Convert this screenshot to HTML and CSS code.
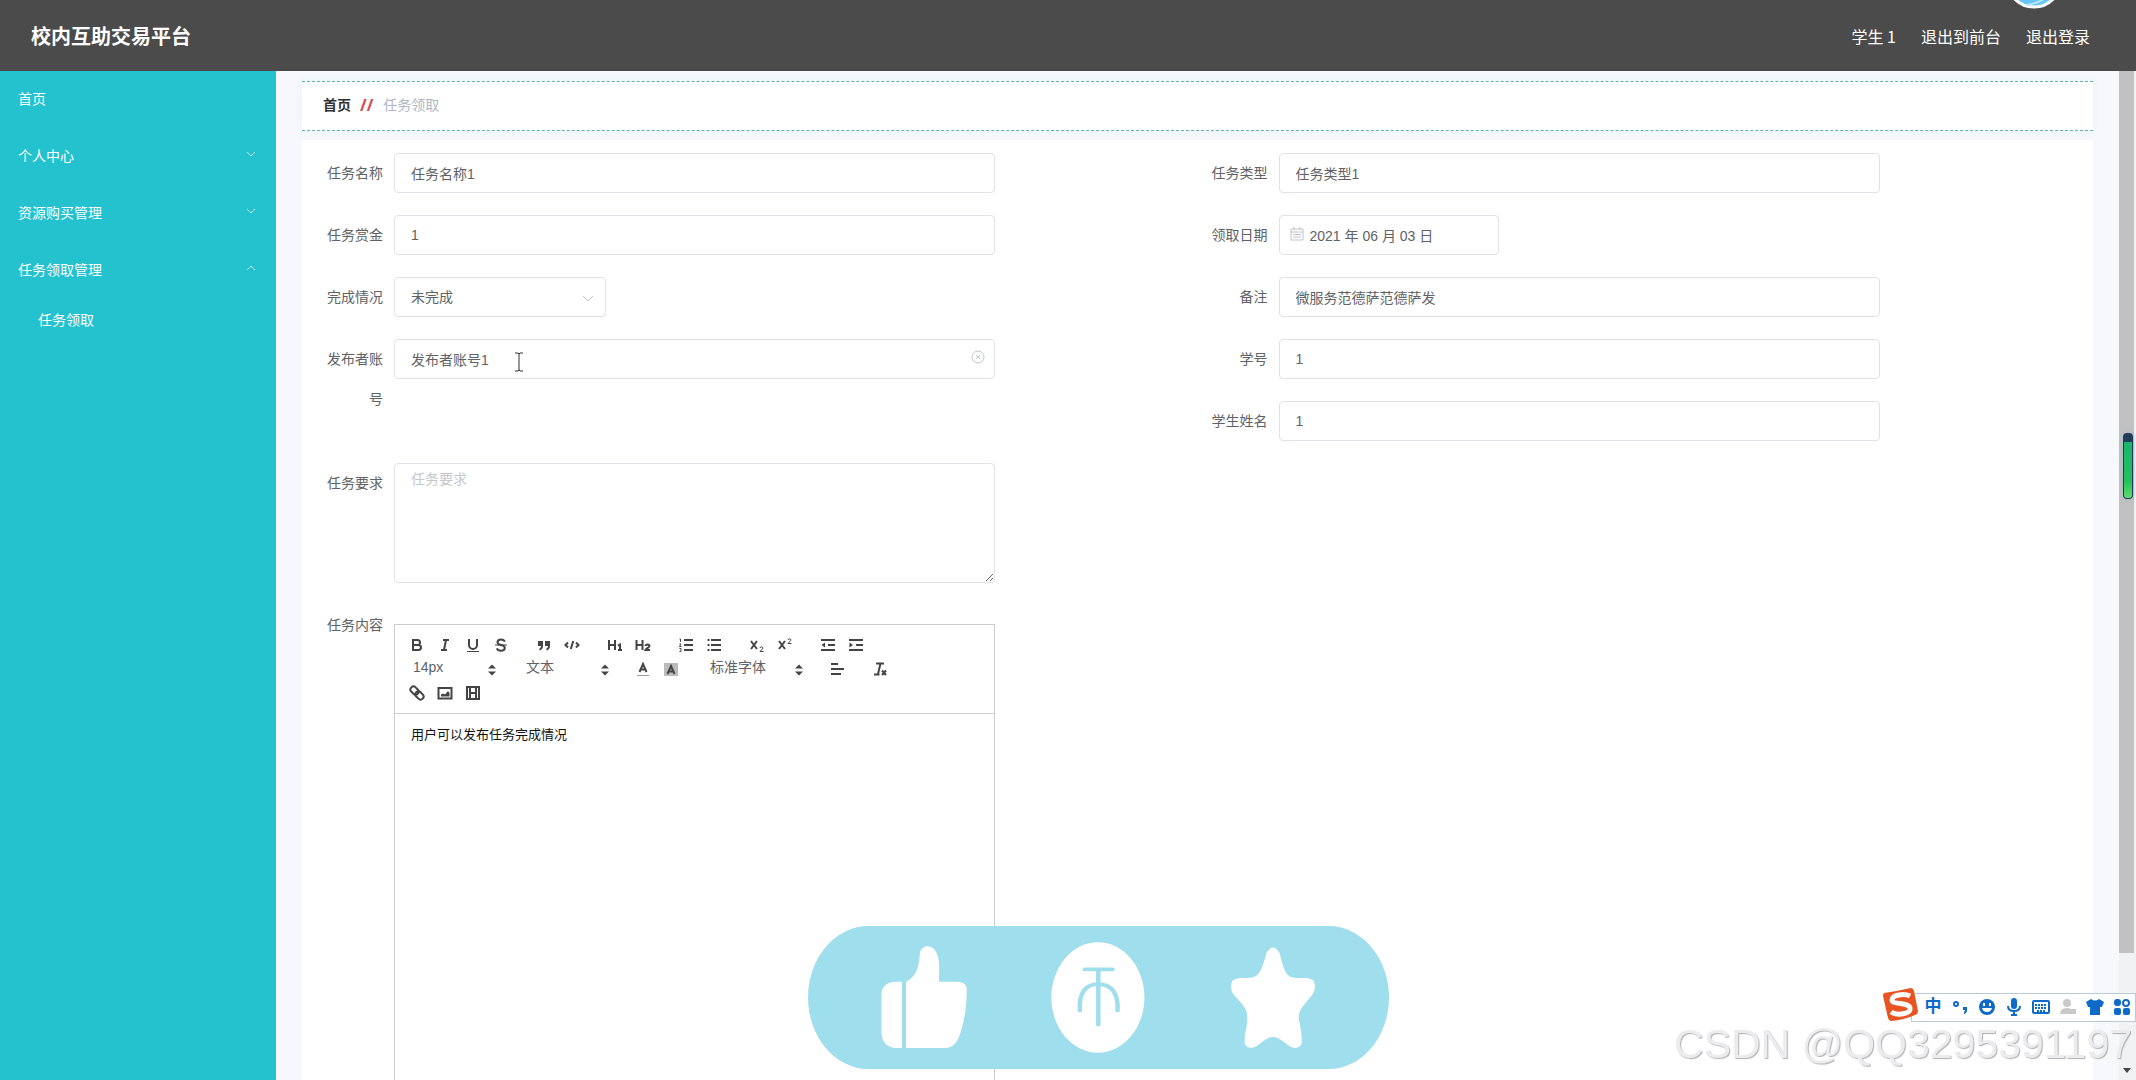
FILE: index.html
```html
<!DOCTYPE html>
<html lang="zh-CN">
<head>
<meta charset="utf-8">
<title>校内互助交易平台</title>
<link rel="stylesheet" href="styles.css">
</head>
<body>
<header class="topbar">
  <h1 class="brand">校内互助交易平台</h1>
  <div class="account">
    <span>学生 1</span>
    <a href="#front">退出到前台</a>
    <a href="#logout">退出登录</a>
  </div>
  <svg class="avatar" viewBox="0 0 58 58" aria-hidden="true"><circle cx="29" cy="29" r="27" fill="#65c6f7" stroke="#fff" stroke-width="3"/><path d="M22 54Q34 52 42 46" stroke="#b5e6ff" stroke-width="2" fill="none"/></svg>
</header>
<div class="shell">
  <nav class="sidebar">
    <a class="nav-item" href="#home">首页</a>
    <a class="nav-item" href="#me">个人中心<svg class="chevron" viewBox="0 0 10 6"><path d="M1 1l4 4 4-4"/></svg></a>
    <a class="nav-item" href="#buy">资源购买管理<svg class="chevron" viewBox="0 0 10 6"><path d="M1 1l4 4 4-4"/></svg></a>
    <a class="nav-item" href="#tasks">任务领取管理<svg class="chevron" viewBox="0 0 10 6"><path d="M1 5l4-4 4 4"/></svg></a>
    <a class="nav-item nav-sub" href="#claim">任务领取</a>
  </nav>
  <main class="content">
    <div class="crumbs"><a href="#home">首页</a><span class="slash">//</span><span class="here">任务领取</span></div>
    <form class="card">
      <div class="field"><label for="name">任务名称</label><div class="control"><input id="name" type="text" value="任务名称1"></div></div>
      <div class="field"><label for="type">任务类型</label><div class="control"><input id="type" type="text" value="任务类型1"></div></div>
      <div class="field"><label for="bounty">任务赏金</label><div class="control"><input id="bounty" type="text" value="1"></div></div>
      <div class="field"><label for="date">领取日期</label><div class="control date">
        <svg class="calendar" viewBox="0 0 14 14"><path d="M1 2h12v11H1zM1 5h12M4 0v3M10 0v3M3 7.500h8M3 10h8"/></svg>
        <input id="date" type="text" value="2021 年 06 月 03 日"></div></div>
      <div class="field"><label for="status">完成情况</label><div class="control status">
        <select id="status"><option>未完成</option></select>
        <svg class="drop" viewBox="0 0 12 8"><path d="M1 1l5 5 5-5"/></svg></div></div>
      <div class="field"><label for="note">备注</label><div class="control"><input id="note" type="text" value="微服务范德萨范德萨发"></div></div>
      <div class="field tall"><label for="publisher">发布者账号</label><div class="control">
        <input id="publisher" type="text" value="发布者账号1">
        <svg class="clear" viewBox="0 0 14 14"><circle cx="7" cy="7" r="6"/><path d="M5 5l4 4M9 5l-4 4"/></svg>
        <svg class="ibeam" viewBox="0 0 10 20"><path d="M1 1h3l1 1 1-1h3M5 2v16M1 19h3l1-1 1 1h3"/></svg></div></div>
      <div class="field"><label for="sno">学号</label><div class="control"><input id="sno" type="text" value="1"></div></div>
      <div class="field"><label for="sname">学生姓名</label><div class="control"><input id="sname" type="text" value="1"></div></div>
      <div class="field left"><label for="req">任务要求</label><div class="control"><textarea id="req" placeholder="任务要求"></textarea></div></div>
      <div class="field left"><label id="body-label">任务内容</label>
        <div class="control editor">
          <div class="toolbar">
            <span class="group">
              <button type="button" aria-label="bold"><svg viewBox="0 0 18 18"><path d="M5 4h4.500a2.500 2.500 0 0 1 0 5H5zM5 9h5.500a2.500 2.500 0 0 1 0 5H5z"/></svg></button>
              <button type="button" aria-label="italic"><svg viewBox="0 0 18 18"><path d="M7 4h6M5 14h6M8 14l2-10"/></svg></button>
              <button type="button" aria-label="underline"><svg viewBox="0 0 18 18"><path d="M5 3v6a4 4 0 0 0 8 0V3"/><path class="thin" d="M3 15.500h12"/></svg></button>
              <button type="button" aria-label="strike"><svg viewBox="0 0 18 18"><path class="thin" d="M3 9h12"/><path class="mid" d="M13 5.500C12 4 10.500 3.500 9 3.500 7 3.500 5.500 4.500 5.500 6.300 5.500 8 7 8.600 9 9s3.800 1.200 3.800 3S11 14.700 9 14.700c-2 0-3.600-.8-4.200-2.400"/></svg></button>
            </span>
            <span class="group">
              <button type="button" aria-label="quote"><svg viewBox="0 0 18 18"><path class="solid" d="M3 5h5v5c0 2.500-1.500 4-3.500 4.500V12.500C5.500 12 6 11 6 10H3zM10 5h5v5c0 2.500-1.500 4-3.500 4.500V12.500c1-.5 1.500-1.500 1.500-2.500h-3z"/></svg></button>
              <button type="button" aria-label="code"><svg viewBox="0 0 18 18"><path class="mid" d="M5 6.500L2.500 9 5 11.500M13 6.500L15.500 9 13 11.500M10.200 5L7.800 13"/></svg></button>
            </span>
            <span class="group">
              <button type="button" aria-label="heading 1"><svg viewBox="0 0 18 18"><path d="M3 4v10M9 4v10M3 9h6"/><path class="mid" d="M12 9.500l2-1V14M12 14h4"/></svg></button>
              <button type="button" aria-label="heading 2"><svg viewBox="0 0 18 18"><path d="M2.500 4v10M8.500 4v10M3 9h6"/><path class="mid" d="M11.500 10c0-2 4-2 4 0 0 1.500-3 2-4 4h4.500"/></svg></button>
            </span>
            <span class="group">
              <button type="button" aria-label="ordered list"><svg viewBox="0 0 18 18"><path d="M7 4h9M7 9h9M7 14h9"/><path class="thin" d="M2.500 3h1v3M2.500 8h1.500l-1.500 2.500h2M2.500 12.500h1.500v3H2.500"/></svg></button>
              <button type="button" aria-label="bullet list"><svg viewBox="0 0 18 18"><path d="M6 4h10M6 9h10M6 14h10M2.500 4h2M2.500 9h2M2.500 14h2"/></svg></button>
            </span>
            <span class="group">
              <button type="button" aria-label="subscript"><svg viewBox="0 0 18 18"><path d="M3 5l6 8M9 5l-6 8"/><path class="thin" d="M12 12c0-1.500 3-1.500 3 0 0 1-2 1.500-3 3.500h3.500"/></svg></button>
              <button type="button" aria-label="superscript"><svg viewBox="0 0 18 18"><path d="M3 5l6 8M9 5l-6 8"/><path class="thin" d="M12 4c0-1.500 3-1.500 3 0 0 1-2 1.500-3 3.500h3.500"/></svg></button>
            </span>
            <span class="group">
              <button type="button" aria-label="outdent"><svg viewBox="0 0 18 18"><path d="M2 4h14M2 14h14M9 9h7"/><path class="solid" d="M2.500 9L6 6.500v5z"/></svg></button>
              <button type="button" aria-label="indent"><svg viewBox="0 0 18 18"><path d="M2 4h14M2 14h14M9 9h7"/><path class="solid" d="M6 9L2.500 6.500v5z"/></svg></button>
            </span>
            <span class="group picker"><select aria-label="字号"><option>14px</option></select><svg class="updown" viewBox="0 0 18 18"><path d="M5 7.500l4-4 4 4zM5 10.500l4 4 4-4z"/></svg></span>
            <span class="group picker"><select aria-label="标题"><option>文本</option></select><svg class="updown" viewBox="0 0 18 18"><path d="M5 7.500l4-4 4 4zM5 10.500l4 4 4-4z"/></svg></span>
            <span class="group">
              <button type="button" aria-label="color"><svg viewBox="0 0 18 18"><path class="thin faint" d="M3 15.500h12"/><path class="mid" d="M5.500 12L9 4l3.500 8M6.500 9.500h5"/></svg></button>
              <button type="button" aria-label="background"><svg viewBox="0 0 18 18"><path class="shade" d="M2 3h14v13H2z"/><path class="mid" d="M5.500 14L9 6l3.500 8M6.500 11.500h5"/></svg></button>
            </span>
            <span class="group picker wide"><select aria-label="字体"><option>标准字体</option></select><svg class="updown" viewBox="0 0 18 18"><path d="M5 7.500l4-4 4 4zM5 10.500l4 4 4-4z"/></svg></span>
            <span class="group"><button type="button" aria-label="align"><svg viewBox="0 0 18 18"><path d="M3 4h7M3 9h13M3 14h10"/></svg></button></span>
            <span class="group"><button type="button" aria-label="clean"><svg viewBox="0 0 18 18"><path class="mid" d="M5 3.500h8M9.500 3.500L7 14M3 14.500h5.500M11 10.500l4 4.500M15 10.500l-4 4.500"/></svg></button></span>
            <span class="group">
              <button type="button" aria-label="link"><svg viewBox="0 0 18 18"><g transform="rotate(45 9 9)"><rect x="1" y="6" width="9" height="6" rx="3"/><rect x="8" y="6" width="9" height="6" rx="3"/></g></svg></button>
              <button type="button" aria-label="image"><svg viewBox="0 0 18 18"><path class="mid" d="M2.500 4h13v10.500h-13z"/><path class="solid" d="M5 12.500v-2l2-1 2 1L12 7l1.500 2v3.500z"/></svg></button>
              <button type="button" aria-label="video"><svg viewBox="0 0 18 18"><path d="M3 3h12v12H3zM6 3v12M12 3v12M6 9h6"/></svg></button>
            </span>
          </div>
          <div class="editor-body" role="textbox" aria-labelledby="body-label" contenteditable="true" spellcheck="false">用户可以发布任务完成情况</div>
        </div>
      </div>
    </form>
  </main>
  <div class="scroller" aria-hidden="true"><div class="thumb"></div><svg viewBox="0 0 8 5"><path d="M0 0h8L4 5z"/></svg></div>
</div>

<div class="battery"></div>

<svg class="reactions" viewBox="69 79 1423 428" preserveAspectRatio="none" aria-hidden="true">
  <rect x="69" y="79" width="1423" height="428" rx="148" ry="214" fill="#9fdeec"/>
  <g fill="#fff">
    <path d="M299 246h-20q-30 6-30 38v120q3 34 30 40h20z"/>
    <path d="M309 246C336 230 341 200 343 160c5-28 33-28 43 5 6 22 4 50 4 81h48q20 3 20 25 0 66-15 125-11 48-38 48h-96z"/>
    <ellipse cx="779" cy="293" rx="114" ry="165"/>
    <path d="M1193 157q15-28 30 0c6 22 10 65 28 75 22 7 42-3 56 10 8 18 3 36-8 50-18 27-29 39-28 64 3 23 9 50 7 75-6 17-20 15-30 7-14-11-24-27-40-27s-26 16-40 27c-12 9-25 8-29-7-3-24 6-48 6-75 1-27-8-38-28-64-11-14-16-32-8-50 16-13 33-3 52-10 20-9 26-53 32-75z"/>
  </g>
  <path d="M747 209h68M780 209v165M735 332c-3-50 12-79 45-79s50 29 47 79" fill="none" stroke="#9fdeec" stroke-width="11" stroke-linecap="round"/>
</svg>

<div class="ime">
  <svg class="ime-logo" viewBox="0 0 36 36"><path d="M1 6Q15 4 28 1q2 0 3 3l4 20q0 3-3 4-11 5-24 6-2 0-3-3L0 9q0-2 1-3z" fill="#e95420"/><path d="M27 9C21 6 9 8 9 13s17 2 18 8-13 8-19 4" fill="none" stroke="#fff" stroke-width="5"/></svg>
  <div class="ime-bar">
    <span class="ime-cn">中</span>
    <svg viewBox="0 0 18 18"><circle cx="5" cy="6" r="2" class="line"/><path d="M12 9h4v3q0 3-3 4v-2q1-1 1-2h-2z"/></svg>
    <svg viewBox="0 0 18 18"><circle cx="9" cy="9" r="8"/><path d="M5 5h2v3H5zM11 5h2v3h-2zM4 10h10q-1 4-5 4t-5-4z" fill="#fff"/></svg>
    <svg viewBox="0 0 18 18"><rect x="6" y="0" width="6" height="11" rx="3"/><path class="line" d="M3 8q0 5 6 5t6-5M9 13v4M6 17h6"/></svg>
    <svg viewBox="0 0 18 18"><rect x="1" y="3" width="16" height="12" rx="1" class="line"/><path class="line" stroke-dasharray="2 1" d="M3 7h12M3 10h12M5 13h8"/></svg>
    <svg viewBox="0 0 18 18"><g fill="#c9c9c9"><circle cx="8" cy="5" r="4"/><path d="M1 16q0-6 7-6 4 0 4 2v4zM12 11h5v5h-5z"/></g></svg>
    <svg viewBox="0 0 18 18"><path d="M5 1q4 3 8 0l5 3-2 5h-2v8H4V9H2L0 4z"/></svg>
    <svg viewBox="0 0 18 18"><rect x="1" y="1" width="7" height="7" rx="3"/><circle cx="13" cy="5" r="3" class="line"/><rect x="1" y="10" width="7" height="7" rx="2"/><rect x="10" y="10" width="7" height="7" rx="2"/></svg>
  </div>
</div>
<div class="watermark">CSDN @QQ3295391197</div>
</body>
</html>
```
FILE: styles.css
```css
* { box-sizing: border-box; }

body {
  margin: 0;
  height: 100vh;
  overflow: hidden;
  display: flex;
  flex-direction: column;
  background: #f7f8fb;
  color: #606266;
  font: 14px/20px "Liberation Sans", "Noto Sans CJK SC", sans-serif;
}

a { color: inherit; text-decoration: none; }

input, select, textarea, button {
  font: inherit;
  color: inherit;
  margin: 0;
}

/* header */
.topbar {
  position: relative;
  flex: 0 0 71px;
  display: flex;
  align-items: center;
  justify-content: space-between;
  padding: 2px 46px 0 31px;
  background: #4b4b4b;
  color: #fff;
}

.brand { margin: 0; font-size: 20px; line-height: 28px; }

.account {
  display: flex;
  gap: 25px;
  padding-bottom: 2px;
  font: 16px/24px "Noto Sans CJK SC", sans-serif;
}

.avatar {
  position: absolute;
  right: 73px;
  top: -49px;
  width: 58px;
  height: 58px;
}

/* layout */
.shell { flex: 1; min-height: 0; display: flex; }

.sidebar {
  flex: 0 0 276px;
  background: #24c1ce;
  color: #fff;
}

.nav-item {
  display: flex;
  align-items: center;
  justify-content: space-between;
  height: 57px;
  padding: 0 20px 2px 18px;
}

.nav-sub { height: 44px; padding-left: 38px; }

.chevron {
  width: 10px;
  height: 6px;
  margin-bottom: 4px;
  fill: none;
  stroke: #d5f5f7;
}

.content {
  flex: 1;
  min-width: 0;
  overflow: hidden;
  padding: 10px 26px 0;
}

.crumbs {
  display: flex;
  align-items: center;
  height: 50px;
  padding: 0 21px 2px;
  background: #fff;
  border-top: 1px dashed #5fb3ad;
  border-bottom: 1px dashed #5fb3ad;
  box-shadow: 0 0 8px #e6f4f8;
}

.crumbs a { color: #303133; font-weight: bold; }
.slash { margin: 0 10px 0 9px; color: #e0414f; font: bold 16px/20px "Noto Sans", sans-serif; }
.here { color: #b0b6c6; }

/* form */
.card {
  display: grid;
  grid-template-columns: 1fr 1fr;
  gap: 22px 0;
  margin-top: 9px;
  padding: 13px 10px 0 12px;
  background: #fff;
}

.field { display: flex; align-items: flex-start; min-width: 0; }
.tall { grid-row: span 2; }
.left { grid-column: 1; }

.field label {
  flex: 0 0 80px;
  padding-right: 11px;
  line-height: 40px;
  text-align: right;
}

.control { position: relative; flex: 0 0 68%; min-width: 0; }

.control > input, .control > select, .control > textarea {
  display: block;
  width: 100%;
  height: 40px;
  padding: 0 16px 1px;
  border: 1px solid #dfe2e8;
  border-radius: 4px;
  background: #fff;
  outline: 0;
  appearance: none;
}

.control > textarea { height: 120px; padding: 5px 16px; }
.control > textarea::placeholder { color: #c6c8cc; }

.date { flex-basis: 220px; }
.control.date > input { padding-left: 30px; }
.status { flex-basis: 212px; }

.calendar, .drop, .clear, .ibeam { position: absolute; fill: none; stroke: #c0c4cc; }
.calendar { left: 11px; top: 12px; width: 14px; height: 14px; }
.drop { right: 12px; top: 18px; width: 12px; height: 8px; }
.clear { right: 10px; top: 11px; width: 14px; height: 14px; }
.ibeam { left: 120px; top: 13px; width: 10px; height: 20px; stroke: #333; }

/* rich text editor */
.editor { margin-top: 19px; border: 1px solid #ccc; }

.toolbar {
  display: flex;
  flex-wrap: wrap;
  padding: 8px;
  border-bottom: 1px solid #ccc;
}

.group { position: relative; display: flex; height: 24px; margin-right: 15px; }

.group button {
  display: flex;
  align-items: center;
  justify-content: center;
  width: 28px;
  height: 24px;
  padding: 0;
  border: 0;
  background: none;
}

.group svg { width: 18px; height: 18px; fill: none; stroke: #444; stroke-width: 2; }
.group .thin { stroke-width: 1; }
.group .mid { stroke-width: 2; }
.group .faint { stroke: #999; }
.group .solid { fill: #444; stroke: none; }
.group .shade { fill: #bbb; stroke: none; }

.picker { width: 98px; }
.wide { width: 108px; }

.picker select {
  width: 100%;
  height: 24px;
  padding: 0 0 4px 10px;
  border: 0;
  background: none;
  appearance: none;
}

.group .updown { position: absolute; right: 0; top: 4px; fill: #444; stroke: none; }

.editor-body {
  min-height: 500px;
  padding: 11px 16px;
  color: #111;
  font-size: 13px;
  outline: 0;
}

/* page scrollbar */
.scroller {
  flex: 0 0 17px;
  display: flex;
  flex-direction: column;
  justify-content: space-between;
  align-items: center;
  padding: 0 2px 7px 0;
  background: #f1f2f4;
}

.thumb { width: 100%; height: 88%; background: #c1c1c1; }
.scroller svg { width: 8px; height: 5px; fill: #444; }

/* overlays */
.battery {
  position: fixed;
  right: 3px;
  top: 433px;
  width: 10px;
  height: 66px;
  border: 1px solid #203c5c;
  border-top-width: 9px;
  border-radius: 4px;
  background: linear-gradient(#19b56b, #25c05c 70%, #5fdc6c);
  box-shadow: 0 0 4px #9fb8c4;
}

.reactions {
  position: fixed;
  left: 808px;
  bottom: 11px;
  width: 581px;
  height: 143px;
}

.ime {
  position: fixed;
  right: 0;
  bottom: 53px;
  display: flex;
  align-items: center;
}

.ime-logo { width: 36px; height: 36px; margin: 0 -8px 4px 0; z-index: 1; }

.ime-bar {
  display: flex;
  align-items: center;
  gap: 9px;
  height: 29px;
  padding: 0 4px 0 12px;
  background: #fff;
  border: 1px solid #b9cbd6;
}

.ime-bar svg { width: 18px; height: 18px; fill: #0d6ac8; }
.ime-bar .line { fill: none; stroke: #0d6ac8; stroke-width: 2; }
.ime-cn { width: 18px; color: #0d6ac8; font-size: 17px; font-weight: bold; text-align: center; }

.watermark {
  position: fixed;
  right: 4px;
  bottom: 12px;
  color: #ececee;
  font-size: 41px;
  line-height: 48px;
  text-shadow: 1px 1px 1px #b0b0b0;
}
```
